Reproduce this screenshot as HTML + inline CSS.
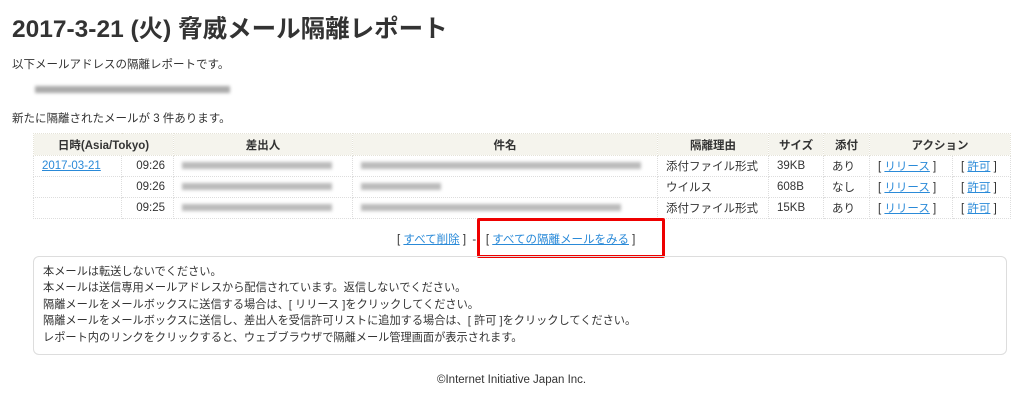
<!DOCTYPE html>
<html><head><meta charset="utf-8"><style>
body{margin:0;width:1024px;height:400px;background:#fff;font-family:"Liberation Sans","Noto Sans CJK JP",sans-serif;color:#333;font-size:11.5px;position:relative;overflow:hidden}
.a{position:absolute;white-space:nowrap}
h1{position:absolute;left:12px;top:10px;margin:0;font-size:24.5px;font-weight:bold;color:#333}
table{position:absolute;left:33px;top:133px;border-collapse:collapse;width:977px;font-size:11.5px;table-layout:fixed}
td,th{border:1px dotted #ddd;height:20px;padding:0 8px;white-space:nowrap;overflow:hidden}
th{background:#f5f4ed;font-weight:bold;height:21px;text-align:center;border-color:#e5e3d8}
a{color:#2a8ad8;text-decoration:underline}
.bl{display:inline-block;height:7px;background:#bbb;filter:blur(1.5px);vertical-align:middle}
.box{position:absolute;left:33px;top:256px;width:974px;height:99px;border:1px solid #ddd;border-radius:6px;box-sizing:border-box}
</style></head><body>
<h1>2017-3-21 (火) 脅威メール隔離レポート</h1>
<div class="a" style="left:12px;top:56px">以下メールアドレスの隔離レポートです。</div>
<div class="a" style="left:35px;top:84px"><span class="bl" style="width:195px;background:#aaa"></span></div>
<div class="a" style="left:12px;top:110px">新たに隔離されたメールが 3 件あります。</div>
<table>
<colgroup><col style="width:88px"><col style="width:52px"><col style="width:179px"><col style="width:305px"><col style="width:111px"><col style="width:55px"><col style="width:46px"><col style="width:83px"><col style="width:58px"></colgroup>
<tr><th colspan="2">日時(Asia/Tokyo)</th><th>差出人</th><th>件名</th><th>隔離理由</th><th>サイズ</th><th>添付</th><th colspan="2">アクション</th></tr>
<tr><td><a>2017-03-21</a></td><td style="text-align:right">09:26</td><td><span class="bl" style="width:150px"></span></td><td><span class="bl" style="width:280px"></span></td><td>添付ファイル形式</td><td>39KB</td><td>あり</td><td>[ <a>リリース</a> ]</td><td>[ <a>許可</a> ]</td></tr>
<tr><td></td><td style="text-align:right">09:26</td><td><span class="bl" style="width:150px"></span></td><td><span class="bl" style="width:80px"></span></td><td>ウイルス</td><td>608B</td><td>なし</td><td>[ <a>リリース</a> ]</td><td>[ <a>許可</a> ]</td></tr>
<tr><td></td><td style="text-align:right">09:25</td><td><span class="bl" style="width:150px"></span></td><td><span class="bl" style="width:260px"></span></td><td>添付ファイル形式</td><td>15KB</td><td>あり</td><td>[ <a>リリース</a> ]</td><td>[ <a>許可</a> ]</td></tr>
</table>
<div class="a" style="left:397px;top:231px">[ <a>すべて削除</a> ]&nbsp; - &nbsp;&nbsp;[ <a>すべての隔離メールをみる</a> ]</div>
<div class="a" style="left:477px;top:218px;width:182px;height:34px;border:3px solid #e00;border-radius:2px"></div>
<div class="box"></div>
<div class="a" style="left:43px;top:264px;line-height:16.4px;font-size:11.2px">本メールは転送しないでください。<br>本メールは送信専用メールアドレスから配信されています。返信しないでください。<br>隔離メールをメールボックスに送信する場合は、[ リリース ]をクリックしてください。<br>隔離メールをメールボックスに送信し、差出人を受信許可リストに追加する場合は、[ 許可 ]をクリックしてください。<br>レポート内のリンクをクリックすると、ウェブブラウザで隔離メール管理画面が表示されます。</div>
<div class="a" style="left:437px;top:374px">©Internet Initiative Japan Inc.</div>
</body></html>
